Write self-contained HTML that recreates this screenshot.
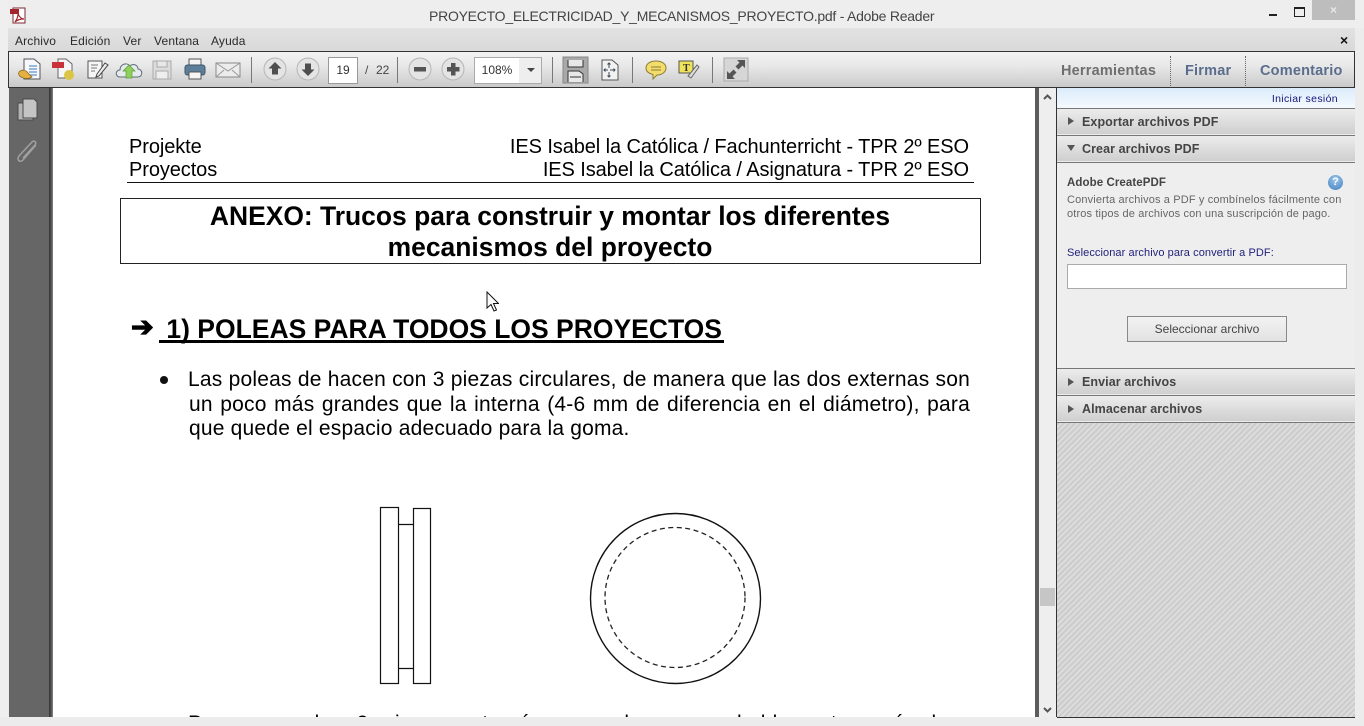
<!DOCTYPE html>
<html><head><meta charset="utf-8">
<style>
html,body{margin:0;padding:0;width:1364px;height:726px;overflow:hidden;background:#ececec;font-family:"Liberation Sans",sans-serif}
.a{position:absolute;white-space:nowrap}
#root{position:relative;width:1364px;height:726px;overflow:hidden}
.p{font-family:"Liberation Sans",sans-serif;color:#000}
.hd{left:1057px;width:298px;height:25px;background:linear-gradient(#ececec,#cfcfcf);border-top:1px solid #777;box-sizing:content-box}
.hdt{left:1082px;font:bold 12.5px "Liberation Sans",sans-serif;color:#444;letter-spacing:.08px}
.tri{width:0;height:0;border-left:6px solid #555;border-top:4px solid transparent;border-bottom:4px solid transparent;left:1068px}
.m{top:34px;font:12px 'Liberation Sans',sans-serif;color:#2a2a2a;letter-spacing:.15px}
.h1{font:20px 'Liberation Sans',sans-serif;color:#000;letter-spacing:-.09px}
</style></head><body><div id="root">
<!-- window frame -->
<div class="a" style="left:0;top:0;width:1364px;height:28px;background:#eeeeee"></div>
<div class="a" style="left:0;top:0;width:8px;height:726px;background:#efefef"></div>
<div class="a" style="left:8px;top:28px;width:1347px;height:23px;background:linear-gradient(#e2e2e2,#d9d9d9)"></div>
<svg class="a" style="left:9px;top:7px" width="20" height="18" viewBox="0 0 20 18"><rect x="4" y="1" width="12" height="15" fill="#fff" stroke="#7a2a30"/><rect x="1" y="2" width="9" height="5" fill="#a5242c"/><path d="M6 15 C9 11 9 8 9 7 C11 11 13 12 15 12 C11 12 8 13 6 15Z" fill="none" stroke="#a5242c" stroke-width="1.2"/></svg>
<div class="a" style="left:429px;top:8px;font:14px 'Liberation Sans',sans-serif;color:#444;letter-spacing:-.25px">PROYECTO_ELECTRICIDAD_Y_MECANISMOS_PROYECTO.pdf - Adobe Reader</div>
<div class="a" style="left:1269px;top:14px;width:8px;height:2px;background:#222"></div>
<div class="a" style="left:1294px;top:7px;width:9px;height:7px;border:1px solid #222;border-top:2px solid #222"></div>
<div class="a" style="left:1312px;top:0;width:43px;height:20px;background:#bdbdbd"></div>
<div class="a" style="left:1330px;top:3px;font:bold 12px 'Liberation Sans',sans-serif;color:#e8e8e8">×</div>
<!-- menu -->
<div class="a m" style="left:15px">Archivo</div>
<div class="a m" style="left:70px">Edición</div>
<div class="a m" style="left:123px">Ver</div>
<div class="a m" style="left:154px">Ventana</div>
<div class="a m" style="left:211px">Ayuda</div>
<div class="a" style="left:1340px;top:32px;font:bold 14px 'Liberation Sans',sans-serif;color:#111">×</div>
<!-- toolbar -->
<div class="a" style="left:8px;top:51px;width:1345px;height:35px;border:1px solid #333;background:linear-gradient(#f2f2f2 0,#e8e8e8 40%,#cacaca 100%)"></div>
<svg class="a" style="left:8px;top:51px" width="760" height="37" viewBox="8 51 760 37">
 <!-- create doc -->
 <path d="M24 59h10l6 5v15H24z" fill="#f6f8fb" stroke="#555"/><path d="M29 66h8M29 69h8M29 72h8M29 75h8" stroke="#3a78c0" stroke-width="1"/>
 <path d="M19 72c3-3 7-2 9 1 2 2 3 3 4 4-3 2-8 2-11 0-2-1-3-3-2-5z" fill="#e4b040" stroke="#8a6a20" stroke-width=".8"/>
 <!-- combine -->
 <path d="M58 59h8l6 5v14H58z" fill="#f6f6f6" stroke="#666"/><rect x="52" y="62" width="12" height="6" fill="#c8333a"/><circle cx="69" cy="75" r="5" fill="#dcc545"/>
 <!-- edit -->
 <path d="M88 61h14v17H88z" fill="#f6f6f6" stroke="#555"/><path d="M91 65h7M91 68h6M91 71h4" stroke="#777"/><path d="M97 74l8-11 3 2-9 11-3 1z" fill="#eee" stroke="#444"/>
 <!-- cloud upload -->
 <path d="M120 77c-5 0-5-7 0-7 0-6 7-8 10-4 3-3 8-1 8 3 5 0 5 8 0 8z" fill="#e6eaec" stroke="#5f6f78"/><path d="M129 65l6 6h-3v7h-6v-7h-3z" fill="#8fd05c" stroke="#5a9a34" stroke-width=".7"/>
 <!-- save -->
 <path d="M153 61h18v18h-18z" fill="#dcdcdc" stroke="#aaa"/><rect x="157" y="61" width="10" height="6" fill="#e8e8e8" stroke="#aaa"/><rect x="156" y="71" width="12" height="8" fill="#eee" stroke="#aaa"/>
 <!-- print -->
 <rect x="189" y="59" width="12" height="7" fill="#f4f4f4" stroke="#555"/><rect x="185" y="65" width="20" height="10" rx="2.5" fill="#5d7f99" stroke="#3e5568"/><rect x="189" y="72" width="12" height="7" fill="#f6f6f6" stroke="#555"/>
 <!-- mail -->
 <rect x="216" y="63" width="24" height="14" fill="#ececec" stroke="#8a8a8a"/><path d="M216 63l12 8 12-8M216 77l8-7M240 77l-8-7" fill="none" stroke="#999"/>
 <rect x="251" y="57" width="1" height="26" fill="#777"/>
 <!-- up / down -->
 <circle cx="275" cy="69" r="11" fill="#e4e4e4" stroke="#b5b5b5"/><path d="M275 62l6.500 6.500h-3.500v6h-6v-6h-3.500z" fill="#4e4e4e"/>
 <circle cx="308" cy="69" r="11" fill="#e4e4e4" stroke="#b5b5b5"/><path d="M308 76l6.500-6.500h-3.500v-6h-6v6h-3.500z" fill="#4e4e4e"/>
 <rect x="397" y="57" width="1" height="26" fill="#777"/>
 <!-- minus / plus -->
 <circle cx="420" cy="69" r="11" fill="#e4e4e4" stroke="#b5b5b5"/><rect x="414" y="67" width="12" height="4.500" fill="#555"/>
 <circle cx="453" cy="69" r="11" fill="#e4e4e4" stroke="#b5b5b5"/><path d="M451 63h4.500v4h4v4.500h-4v4h-4.500v-4h-4v-4.500h4z" fill="#555"/>
 <rect x="552" y="57" width="1" height="26" fill="#777"/>
 <!-- fit width active -->
 <rect x="563" y="57" width="25" height="26" fill="#a9a9a9" stroke="#888"/><path d="M568 60v7h15v-7M568 82v-11h11l4 3v8" fill="#e8e8e8" stroke="#333"/><path d="M570 77h11" stroke="#333"/>
 <!-- fit page -->
 <path d="M602 60h10l6 5v15h-16z" fill="#f2f2f2" stroke="#555"/>
 <path d="M609 63v5M609 72v5M604 70h4M610 70h5M607.500 64.500l1.500-1.500 1.500 1.500M607.500 75.500l1.500 1.500 1.500-1.500M605.500 68.500l-1.500 1.500 1.500 1.500M613.500 68.500l1.500 1.500-1.500 1.500" fill="none" stroke="#3e4a58"/>
 <rect x="632" y="57" width="1" height="26" fill="#777"/>
 <!-- comment -->
 <path d="M656 61c6 0 10 3 10 7s-4 7-9 7l-4 4 0-4.500c-4-1-7-3-7-6.500 0-4 4-7 10-7z" fill="#f2dc6a" stroke="#8d7c36"/><path d="M651 67h10M651 70h10" stroke="#8d7c36"/>
 <!-- highlight -->
 <rect x="679" y="61" width="14" height="12" fill="#efe35a" stroke="#555"/><text x="683" y="71" font-family="Liberation Serif,serif" font-size="10" font-weight="bold" fill="#333">T</text><path d="M688 76l9-11 2 2-8 11z" fill="#ddd" stroke="#666"/>
 <rect x="712" y="57" width="1" height="26" fill="#777"/>
 <!-- expand -->
 <rect x="724" y="58" width="24" height="23" fill="#d6d6d6" stroke="#aaa"/><path d="M745 60v8l-2.500-2.500-4 4-3-3 4-4-2.500-2.500zM727 79v-8l2.500 2.500 4-4 3 3-4 4 2.500 2.500z" fill="#555"/>
</svg>
<div class="a" style="left:328px;top:57px;width:28px;height:25px;background:#fff;border:1px solid #999;text-align:center;font:12px/25px 'Liberation Sans',sans-serif;color:#333">19</div>
<div class="a" style="left:365px;top:63px;font:12px 'Liberation Sans',sans-serif;color:#444">/</div>
<div class="a" style="left:376px;top:63px;font:12px 'Liberation Sans',sans-serif;color:#444">22</div>
<div class="a" style="left:474px;top:57px;width:44px;height:25px;background:#fff;border:1px solid #aaa;text-align:center;font:12px/25px 'Liberation Sans',sans-serif;color:#333">108%</div>
<div class="a" style="left:519px;top:57px;width:22px;height:25px;background:#eee;border:1px solid #aaa;border-left:0"></div>
<div class="a" style="left:527px;top:68px;width:0;height:0;border-top:4px solid #444;border-left:4px solid transparent;border-right:4px solid transparent"></div>
<div class="a" style="left:1061px;top:63px;font:bold 14.5px 'Liberation Sans',sans-serif;color:#6f6f6f;letter-spacing:.2px">Herramientas</div>
<div class="a" style="left:1185px;top:63px;font:bold 14.5px 'Liberation Sans',sans-serif;color:#5a6d8c;letter-spacing:.2px">Firmar</div>
<div class="a" style="left:1260px;top:63px;font:bold 14.5px 'Liberation Sans',sans-serif;color:#5a6d8c;letter-spacing:.2px">Comentario</div>
<div class="a" style="left:1170px;top:56px;height:30px;border-left:1px dotted #666"></div>
<div class="a" style="left:1245px;top:56px;height:30px;border-left:1px dotted #666"></div>
<!-- nav pane -->
<div class="a" style="left:9px;top:88px;width:40px;height:629px;background:#666666"></div>
<div class="a" style="left:49px;top:88px;width:4px;height:629px;background:linear-gradient(90deg,#333,#555 60%,#888)"></div>
<svg class="a" style="left:9px;top:88px" width="40" height="80" viewBox="9 88 40 80">
 <rect x="18" y="103" width="15" height="17" fill="#b5b5b5" stroke="#4a4a4a"/><path d="M23 99h11l3 3v16H23z" fill="#c4c4c4" stroke="#4a4a4a"/>
 <path d="M36 145L23 160c-3 3-7 0-4-4l13-14c2-2 5 0 3 3L23 158" fill="none" stroke="#a0a0a0" stroke-width="1.500"/>
</svg>
<!-- page -->
<div class="a" style="left:53px;top:88px;width:982px;height:629px;background:#fff;overflow:hidden"></div>
<div class="a" style="left:1035px;top:88px;width:4px;height:629px;background:#5c5c5c"></div>
<div class="a" style="left:1039px;top:88px;width:17px;height:629px;background:#eeeeee"></div>
<svg class="a" style="left:1039px;top:88px" width="17" height="629" viewBox="0 0 17 629"><path d="M5 11l3.500-3.500L12 11M5 620l3.500 3.500L12 620" fill="none" stroke="#555" stroke-width="2"/></svg>
<div class="a" style="left:1040px;top:588px;width:15px;height:18px;background:#c6c6c6"></div>
<!-- document text -->
<div class="a h1" style="left:129px;top:136px">Projekte</div>
<div class="a h1" style="left:129px;top:159px">Proyectos</div>
<div class="a h1" style="right:395px;top:136px">IES Isabel la Católica / Fachunterricht - TPR 2º ESO</div>
<div class="a h1" style="right:395px;top:159px">IES Isabel la Católica / Asignatura - TPR 2º ESO</div>
<div class="a" style="left:127px;top:182px;width:847px;height:1px;background:#111"></div>
<div class="a" style="left:120px;top:198px;width:859px;height:64px;border:1px solid #222"></div>
<div class="a p" style="left:120px;top:201px;width:860px;text-align:center;font-weight:bold;font-size:26.450px;line-height:31px;">ANEXO: Trucos para construir y montar los diferentes<br>mecanismos del proyecto</div>
<div class="a p" style="left:131px;top:312px;font:bold 27px 'DejaVu Sans',sans-serif;-webkit-text-stroke:1.200px #000">➔</div>
<div class="a p" style="left:159px;top:314px;font-weight:bold;font-size:26.500px;">&nbsp;1) POLEAS PARA TODOS LOS PROYECTOS</div>
<div class="a" style="left:159px;top:340px;width:565px;height:3px;background:#000"></div>
<div class="a" style="left:160px;top:376px;width:8px;height:8px;border-radius:50%;background:#111"></div>
<div class="a p" style="left:188px;top:368px;width:782px;font-size:21px;letter-spacing:.2px;text-align:justify;text-align-last:justify">Las poleas de hacen con 3 piezas circulares, de manera que las dos externas son</div>
<div class="a p" style="left:189px;top:393px;width:781px;font-size:21px;letter-spacing:.2px;text-align:justify;text-align-last:justify">un poco más grandes que la interna (4-6 mm de diferencia en el diámetro), para</div>
<div class="a p" style="left:189px;top:417px;font-size:21px;letter-spacing:.2px">que quede el espacio adecuado para la goma.</div>
<svg class="a" style="left:53px;top:490px" width="982" height="227" viewBox="53 490 982 227">
 <rect x="380.500" y="507.500" width="18" height="176" fill="none" stroke="#111" stroke-width="1.200"/>
 <rect x="413.500" y="508.500" width="17" height="175" fill="none" stroke="#111" stroke-width="1.200"/>
 <path d="M398 524.500h15M398 668.500h15" stroke="#111" stroke-width="1.200"/>
 <circle cx="675.500" cy="598.500" r="85" fill="none" stroke="#111" stroke-width="1.400"/>
 <circle cx="675" cy="597.500" r="70" fill="none" stroke="#222" stroke-width="1.300" stroke-dasharray="5 3.500"/>
</svg>
<div class="a p" style="left:188px;top:712px;width:771px;height:5px;overflow:hidden;font-size:21px;line-height:24px;letter-spacing:.2px;text-align:justify;text-align-last:justify">Pero como las 3 piezas actuarán como lo que probablemente serán los</div>
<!-- bottom -->
<div class="a" style="left:0;top:717px;width:1364px;height:9px;background:#ececec"></div>
<!-- right panel -->
<div class="a" style="left:1056px;top:88px;width:1px;height:629px;background:#333"></div>
<div class="a" style="left:1057px;top:88px;width:298px;height:20px;background:linear-gradient(#dcecfb,#f4f9fe)"></div>
<div class="a" style="right:26px;top:93px;font:10.500px/13px 'Liberation Sans',sans-serif;color:#15157a;letter-spacing:.35px">Iniciar sesión</div>
<div class="a hd" style="top:108px"></div>
<div class="a hd" style="top:135px"></div>
<div class="a tri" style="top:117px"></div>
<div class="a" style="left:1067px;top:145px;width:0;height:0;border-top:6px solid #555;border-left:4px solid transparent;border-right:4px solid transparent"></div>
<div class="a hdt" style="top:115px">Exportar archivos PDF</div>
<div class="a hdt" style="top:142px">Crear archivos PDF</div>
<div class="a" style="left:1057px;top:162px;width:298px;height:206px;background:#eeeeee;border-top:1px solid #777"></div>
<div class="a" style="left:1067px;top:177px;font:bold 11.500px 'Liberation Sans',sans-serif;color:#444;letter-spacing:.08px">Adobe CreatePDF</div>
<div class="a" style="left:1328px;top:175px;width:15px;height:15px;border-radius:50%;background:radial-gradient(circle at 50% 30%,#9cc6ea,#3f80c0);color:#fff;font:bold 11px/15px 'Liberation Sans',sans-serif;text-align:center">?</div>
<div class="a" style="left:1067px;top:194px;font:11px/13.500px 'Liberation Sans',sans-serif;color:#666;letter-spacing:.14px">Convierta archivos a PDF y combínelos fácilmente con<br>otros tipos de archivos con una suscripción de pago.</div>
<div class="a" style="left:1067px;top:247px;font:11px/13px 'Liberation Sans',sans-serif;color:#1f1f7a;letter-spacing:.08px">Seleccionar archivo para convertir a PDF:</div>
<div class="a" style="left:1067px;top:264px;width:278px;height:23px;background:#fff;border:1px solid #aaa"></div>
<div class="a" style="left:1127px;top:316px;width:158px;height:24px;border:1px solid #888;background:linear-gradient(#f2f2f2,#e2e2e2);text-align:center;font:12px/24px 'Liberation Sans',sans-serif;color:#444">Seleccionar archivo</div>
<div class="a hd" style="top:368px"></div>
<div class="a hd" style="top:395px"></div>
<div class="a tri" style="top:378px"></div>
<div class="a tri" style="top:405px"></div>
<div class="a hdt" style="top:375px">Enviar archivos</div>
<div class="a hdt" style="top:402px">Almacenar archivos</div>
<div class="a" style="left:1057px;top:422px;width:298px;height:295px;border-top:1px solid #777;box-sizing:border-box;background:repeating-linear-gradient(135deg,#cccccc 0,#cccccc 2px,#dcdcdc 2px,#dcdcdc 4px)"></div>
<div class="a" style="left:1057px;top:717px;width:298px;height:1px;background:#333"></div>
<!-- cursor -->
<svg class="a" style="left:485px;top:291px" width="14" height="22" viewBox="0 0 14 22"><path d="M2 1v16l4-3.500 3 6.500 2.500-1-3-6.500h5z" fill="#fff" stroke="#111"/></svg>
</div></body></html>
